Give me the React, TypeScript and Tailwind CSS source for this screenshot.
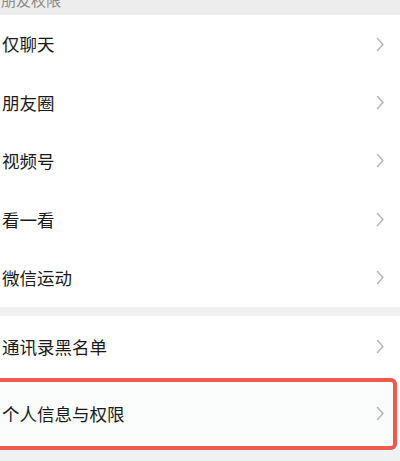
import React from "react";

const Chevron = () => (
  <svg width="9" height="15" viewBox="0 0 9 15" className="shrink-0">
    <path d="M1.5 1.5 L7 7.5 L1.5 13.5" fill="none" stroke="#b8b8b8" strokeWidth="1.6" strokeLinecap="round" strokeLinejoin="round" />
  </svg>
);

const Row = ({ label, h }: { label: string; h: string }) => (
  <div className={`flex items-center justify-between pl-[2px] pr-[15px] ${h}`}>
    <span className="text-[17.5px] text-[#1a1a1a] leading-none">{label}</span>
    <Chevron />
  </div>
);

export default function App() {
  const items = ["仅聊天", "朋友圈", "视频号", "看一看", "微信运动"];
  return (
    <div
      className="w-[400px] h-[461px] overflow-hidden bg-[#eef2f2] flex flex-col"
      style={{ fontFamily: '"Noto Sans CJK SC", "Noto Sans", sans-serif' }}
    >
      <div className="h-[15px] bg-[#ededed] overflow-hidden relative shrink-0">
        <span className="block text-[15px] leading-[15px] text-[#8a8a8a] -mt-[8px] pl-[1px]">朋友权限</span>
      </div>
      <div className="bg-white flex flex-col shrink-0">
        {items.map((t) => (
          <Row key={t} label={t} h="h-[58.4px]" />
        ))}
      </div>
      <div className="h-[9px] bg-[#f0f0f0] shrink-0" />
      <div className="bg-white flex flex-col shrink-0">
        <Row label="通讯录黑名单" h="h-[62px]" />
        <div className="h-[72px] -ml-[8px] mr-[3px] border-4 border-[#ef5a4f] rounded-[6px] bg-[#fbfdfd] flex items-center justify-between pl-[6px] pr-[8px]">
          <span className="text-[17.5px] text-[#1a1a1a] leading-none">个人信息与权限</span>
          <Chevron />
        </div>
      </div>
    </div>
  );
}
